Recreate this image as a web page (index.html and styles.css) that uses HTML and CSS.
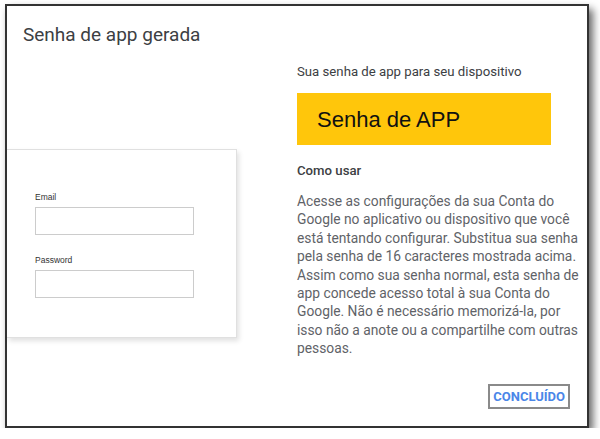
FILE: index.html
```html
<!DOCTYPE html>
<html lang="pt-BR">
<head>
  <meta charset="UTF-8">
  <title>Senha de app gerada</title>
  <link rel="stylesheet" href="styles.css">
</head>
<body>

<div class="dialog">
  <h2 class="dialog-title">Senha de app gerada</h2>

  <div class="dialog-body">
    <div class="preview">
      <div class="login-card">
        <label>Email</label>
        <div class="fake-input"></div>
        <label>Password</label>
        <div class="fake-input"></div>
      </div>
    </div>

    <div class="info">
      <p class="subtitle">Sua senha de app para seu dispositivo</p>
      <div class="app-password">Senha de APP</div>
      <p class="how-title">Como usar</p>
      <p class="how-text">Acesse as configurações da sua Conta do Google no aplicativo ou dispositivo que você está tentando configurar. Substitua sua senha pela senha de 16 caracteres mostrada acima. Assim como sua senha normal, esta senha de app concede acesso total à sua Conta do Google. Não é necessário memorizá-la, por isso não a anote ou a compartilhe com outras pessoas.</p>
    </div>
  </div>

  <div class="dialog-actions">
    <button class="done">CONCLUÍDO</button>
  </div>
</div>

</body>
</html>
```

FILE: styles.css
```css
body {
  margin: 0;
  background: #fff;
  font-family: Roboto, "Noto Sans", Arial, sans-serif;
}

.dialog {
  margin: 4px 0 0 5px;
  width: 580px;
  height: 420px;
  border: 2px solid #333;
  background: #fff;
  box-shadow: 4px 5px 8px rgba(0,0,0,0.6);
  display: flex;
  flex-direction: column;
}

.dialog-title {
  margin: 16px 0 0 16px;
  font-size: 19px;
  line-height: 25px;
  font-weight: 400;
  color: #3c4043;
}

.dialog-body {
  display: flex;
  margin-top: 14px;
}

.preview {
  width: 230px;
  padding-top: 88px;
}

.login-card {
  height: 189px;
  border: 1px solid #e0e0e0;
  border-left: none;
  box-shadow: 2px 3px 5px rgba(0,0,0,0.12);
  padding: 42px 0 0 28px;
  box-sizing: border-box;
  font-family: "Liberation Sans", Arial, sans-serif;
}

.login-card label {
  display: block;
  font-size: 8.5px;
  line-height: 10px;
  color: #333;
  margin-bottom: 5px;
}

.fake-input {
  width: 157px;
  height: 26px;
  border: 1px solid #ccc;
  margin-bottom: 20px;
}

.info {
  margin-left: 60px;
  width: 282px;
}

.subtitle {
  margin: 1px 0 0;
  font-size: 13.2px;
  line-height: 20px;
  font-weight: 400;
  color: #3c4043;
}

.app-password {
  margin-top: 11px;
  width: 254px;
  height: 52px;
  background: #ffc60b;
  box-sizing: border-box;
  padding-left: 20px;
  font-family: "Liberation Sans", Arial, sans-serif;
  font-size: 22px;
  line-height: 54px;
  color: #111;
}

.how-title {
  margin: 16px 0 0;
  font-size: 13.2px;
  line-height: 20px;
  font-weight: 500;
  color: #3c4043;
}

.how-text {
  margin: 11px 0 0;
  font-size: 13.8px;
  line-height: 18.4px;
  color: #5f6368;
}

.dialog-actions {
  display: flex;
  justify-content: flex-end;
  margin-top: auto;
  padding: 0 17px 17px 0;
}

.done {
  background: #fff;
  border: 2px solid #8a8a8a;
  padding: 0 3px;
  height: 25px;
  font-family: Roboto, Arial, sans-serif;
  font-size: 13px;
  font-weight: 700;
  color: #4a86e8;
  cursor: pointer;
}
```
